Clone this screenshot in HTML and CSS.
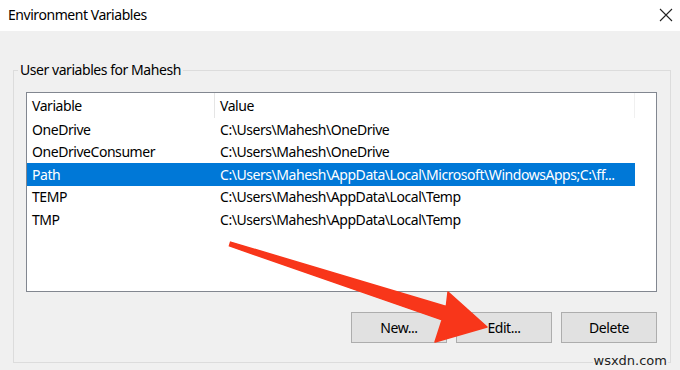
FILE: index.html
```html
<!DOCTYPE html>
<html lang="en">
<head>
    <meta charset="UTF-8">
    <title>Environment Variables</title>
    <link rel="stylesheet" href="styles.css">
</head>
<body>
    <div class="window">
        <div class="titlebar">
            <span class="title">Environment Variables</span>
            <svg class="close" width="14" height="14" viewBox="0 0 14 14">
                <path d="M1 1 L13 13 M13 1 L1 13" stroke="#222" stroke-width="1.1" fill="none"/>
            </svg>
        </div>

        <div class="content">
            <fieldset class="group">
                <legend>User variables for Mahesh</legend>

                <div class="listview">
                    <div class="lv-header">
                        <div class="col-var">Variable</div>
                        <div class="col-val">Value</div>
                    </div>
                    <div class="lv-row">
                        <div class="col-var">OneDrive</div>
                        <div class="col-val">C:\Users\Mahesh\OneDrive</div>
                    </div>
                    <div class="lv-row">
                        <div class="col-var">OneDriveConsumer</div>
                        <div class="col-val">C:\Users\Mahesh\OneDrive</div>
                    </div>
                    <div class="lv-row selected">
                        <div class="col-var">Path</div>
                        <div class="col-val">C:\Users\Mahesh\AppData\Local\Microsoft\WindowsApps;C:\ff...</div>
                    </div>
                    <div class="lv-row">
                        <div class="col-var">TEMP</div>
                        <div class="col-val">C:\Users\Mahesh\AppData\Local\Temp</div>
                    </div>
                    <div class="lv-row">
                        <div class="col-var">TMP</div>
                        <div class="col-val">C:\Users\Mahesh\AppData\Local\Temp</div>
                    </div>
                </div>

                <div class="actions">
                    <button class="btn">New...</button>
                    <button class="btn">Edit...</button>
                    <button class="btn">Delete</button>
                </div>
            </fieldset>
        </div>

        <!-- callout arrow drawn over the dialog -->
        <svg class="arrow" width="680" height="370" viewBox="0 0 680 370">
            <polygon points="230.6,242.1 446.3,306.5 448,292 487,327 435,342 442.1,319.9 229.4,245.9"
                     fill="#f8361a" stroke="#f8361a" stroke-width="1.5" stroke-linejoin="round"/>
        </svg>

        <span class="watermark">wsxdn.com</span>
    </div>
</body>
</html>
```

FILE: styles.css
```css
body {
    margin: 0;
    padding: 0;
    font-family: 'Noto Sans', 'Open Sans', sans-serif;
    letter-spacing: -0.45px;
    color: #000;
}

.window {
    position: relative;
    width: 680px;
    height: 370px;
    background-color: #f0f0f0;
    overflow: hidden;
}

.titlebar {
    height: 31px;
    background-color: #ffffff;
    display: flex;
    align-items: center;
    justify-content: space-between;
    padding: 0 7px 2px 8px;
    box-sizing: border-box;
}

.title {
    font-size: 14px;
    color: #000;
}

.content {
    padding: 30px 9px 0 13px;
}

.group {
    margin: 0;
    padding: 13px 13px 19px 12px;
    border: 1px solid #dcdcdc;
    min-width: 0;
}

.group legend {
    font-size: 14px;
    line-height: 18px;
    padding: 0 2px;
    margin-left: -8px;
}

.listview {
    height: 198px;
    border: 1px solid #828790;
    background-color: #ffffff;
    font-size: 14px;
}

.lv-header,
.lv-row {
    display: flex;
    width: 608px;
}

.lv-header {
    height: 25px;
    align-items: center;
    border-right: 1px solid #f0f0f0;
    box-sizing: border-box;
}

.lv-header .col-var {
    border-right: 1px solid #e5e5e5;
    height: 100%;
    display: flex;
    align-items: center;
    box-sizing: border-box;
}

.lv-row {
    height: 22.5px;
    align-items: center;
}

.col-var {
    width: 188px;
    padding-left: 5px;
    box-sizing: border-box;
    white-space: nowrap;
}

.col-val {
    flex: 1;
    padding-left: 5px;
    white-space: nowrap;
    overflow: hidden;
}

.lv-row.selected {
    background-color: #0078d7;
    color: #ffffff;
}

.actions {
    display: flex;
    justify-content: flex-end;
    gap: 9px;
    margin-top: 20px;
}

.btn {
    width: 96px;
    height: 31px;
    background-color: #e1e1e1;
    border: 1px solid #adadad;
    font-family: 'Noto Sans', 'Open Sans', sans-serif;
    font-size: 14px;
    letter-spacing: -0.45px;
    color: #000;
    padding: 0;
}

.arrow {
    position: absolute;
    top: 0;
    left: 0;
    pointer-events: none;
}

.watermark {
    position: absolute;
    right: 12px;
    bottom: 2px;
    font-family: 'DejaVu Sans', sans-serif;
    font-size: 13px;
    letter-spacing: 0;
    color: #222;
    background-color: #f0f0f0;
    padding: 0 1px;
}
```
